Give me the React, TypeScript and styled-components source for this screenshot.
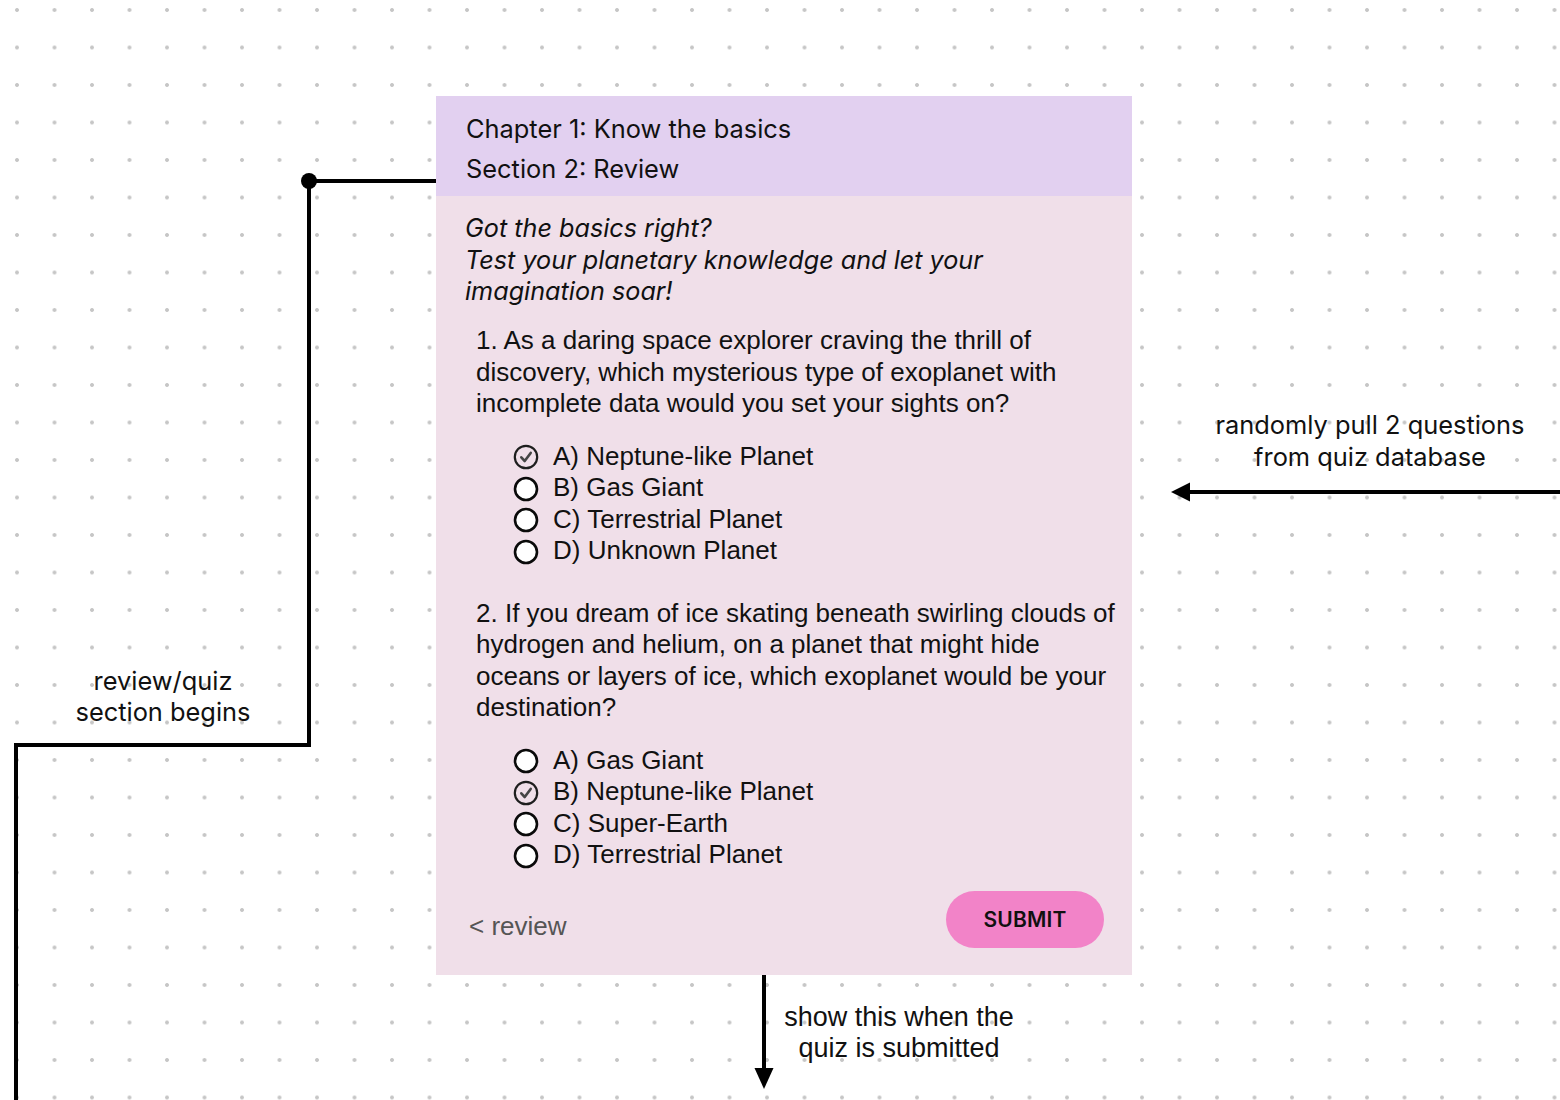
import React from "react";
import styled, { createGlobalStyle } from "styled-components";

const GlobalStyle = createGlobalStyle`
  html, body {
    margin: 0;
    padding: 0;
  }
  body {
    background-color: #ffffff;
    background-image: radial-gradient(circle at center, #c6c6c6 1.5px, transparent 2.3px);
    background-size: 37.5px 37.5px;
    background-position: -1.75px -8.75px;
    font-family: "Inter", "Liberation Sans", sans-serif;
    color: #111;
  }
`;

const SF = `"Inter", "Liberation Sans", sans-serif`;
const ARIAL = `"Liberation Sans", Arial, sans-serif`;

type Option = { label: string; checked?: boolean };
type Question = { lines: string[]; options: Option[] };

const questions: Question[] = [
  {
    lines: [
      "1. As a daring space explorer craving the thrill of",
      "discovery, which mysterious type of exoplanet with",
      "incomplete data would you set your sights on?",
    ],
    options: [
      { label: "A) Neptune-like Planet", checked: true },
      { label: "B) Gas Giant" },
      { label: "C) Terrestrial Planet" },
      { label: "D) Unknown Planet" },
    ],
  },
  {
    lines: [
      "2. If you dream of ice skating beneath swirling clouds of",
      "hydrogen and helium, on a planet that might hide",
      "oceans or layers of ice, which exoplanet would be your",
      "destination?",
    ],
    options: [
      { label: "A) Gas Giant" },
      { label: "B) Neptune-like Planet", checked: true },
      { label: "C) Super-Earth" },
      { label: "D) Terrestrial Planet" },
    ],
  },
];

function Radio({ checked }: { checked?: boolean }) {
  return (
    <RadioMark viewBox="0 0 26 26" aria-hidden>
      {checked ? (
        <>
          <circle cx="13" cy="13" r="11.2" fill="none" stroke="#1e1e1e" strokeWidth="2.2" />
          <path
            d="M8.3 13.3 L11.7 17 L17.7 8.9"
            fill="none"
            stroke="#454545"
            strokeWidth="2.6"
            strokeLinecap="round"
            strokeLinejoin="round"
          />
        </>
      ) : (
        <circle cx="13" cy="13" r="11" fill="#fff" stroke="#0a0a0a" strokeWidth="2.6" />
      )}
    </RadioMark>
  );
}

function Connectors() {
  return (
    <Lines viewBox="0 0 1560 1100">
      <path d="M436 181 H309 V745 H16 V1110" fill="none" stroke="#000" strokeWidth="4" />
      <circle cx="309" cy="181" r="8" fill="#000" />
      <path d="M1560 492 H1186" fill="none" stroke="#000" strokeWidth="4" />
      <polygon points="1171,492 1190,482.5 1190,501.5" fill="#000" />
      <path d="M764 975 V1072" fill="none" stroke="#000" strokeWidth="4" />
      <polygon points="764,1089 754.5,1068 773.5,1068" fill="#000" />
    </Lines>
  );
}

export default function App() {
  return (
    <>
      <GlobalStyle />
      <Canvas>
        <Connectors />

        <Note $left={33} $top={665} $width={260} $lh={31}>
          review/quiz
          <br />
          section begins
        </Note>

        <Note $left={1190} $top={409} $width={360} $lh={32}>
          randomly pull 2 questions
          <br />
          from quiz database
        </Note>

        <Note $left={759} $top={1002} $width={280} $lh={31} $arial>
          show this when the
          <br />
          quiz is submitted
        </Note>

        <Card>
          <Header>
            <HeaderLine>Chapter 1: Know the basics</HeaderLine>
            <HeaderLine>Section 2: Review</HeaderLine>
          </Header>
          <Body>
            <Intro>
              Got the basics right?
              <br />
              Test your planetary knowledge and let your
              <br />
              imagination soar!
            </Intro>

            {questions.map((q, qi) => (
              <QuestionBlock key={qi} $first={qi === 0}>
                <Prompt>
                  {q.lines.map((line, li) => (
                    <React.Fragment key={li}>
                      {li > 0 && <br />}
                      {line}
                    </React.Fragment>
                  ))}
                </Prompt>
                <Options>
                  {q.options.map((o) => (
                    <OptionRow key={o.label}>
                      <Radio checked={o.checked} />
                      <span>{o.label}</span>
                    </OptionRow>
                  ))}
                </Options>
              </QuestionBlock>
            ))}

            <Footer>
              <BackLink>&lt; review</BackLink>
              <SubmitButton>SUBMIT</SubmitButton>
            </Footer>
          </Body>
        </Card>
      </Canvas>
    </>
  );
}

const Canvas = styled.div`
  position: relative;
  width: 1560px;
  height: 1100px;
  overflow: hidden;
`;

const Lines = styled.svg`
  position: absolute;
  left: 0;
  top: 0;
  width: 1560px;
  height: 1100px;
  pointer-events: none;
`;

const Note = styled.div<{ $left: number; $top: number; $width: number; $lh: number; $arial?: boolean }>`
  position: absolute;
  left: ${(p) => p.$left}px;
  top: ${(p) => p.$top}px;
  width: ${(p) => p.$width}px;
  text-align: center;
  font-family: ${(p) => (p.$arial ? ARIAL : SF)};
  font-size: ${(p) => (p.$arial ? 27 : 25.4)}px;
  line-height: ${(p) => p.$lh}px;
  color: #111;
`;

const Card = styled.section`
  position: absolute;
  left: 436px;
  top: 96px;
  width: 696px;
  height: 879px;
  background: #f0dfe9;
  display: flex;
  flex-direction: column;
`;

const Header = styled.header`
  height: 100px;
  box-sizing: border-box;
  padding: 13px 30px 0;
  background: #e2d0f0;
`;

const HeaderLine = styled.div`
  font-family: ${SF};
  font-size: 25.4px;
  line-height: 40px;
  color: #111;
`;

const Body = styled.div`
  flex: 1;
  display: flex;
  flex-direction: column;
  padding: 17px 28px 0 29px;
`;

const Intro = styled.p`
  margin: 0;
  font-family: ${SF};
  font-style: italic;
  font-size: 25.2px;
  line-height: 31.5px;
  color: #111;
`;

const QuestionBlock = styled.div<{ $first?: boolean }>`
  margin-top: ${(p) => (p.$first ? 17.5 : 31)}px;
  padding-left: 11px;
`;

const Prompt = styled.p`
  margin: 0;
  font-family: ${ARIAL};
  font-size: 26px;
  line-height: 31.5px;
  white-space: nowrap;
  color: #111;
`;

const Options = styled.ul`
  list-style: none;
  margin: 21px 0 0;
  padding: 0 0 0 37px;
`;

const OptionRow = styled.li`
  display: flex;
  align-items: center;
  gap: 14px;
  height: 31.5px;
  font-family: ${ARIAL};
  font-size: 26px;
  color: #111;
`;

const RadioMark = styled.svg`
  width: 26px;
  height: 26px;
  flex-shrink: 0;
  margin-top: 2px;
`;

const Footer = styled.div`
  display: flex;
  justify-content: space-between;
  align-items: flex-start;
  margin-top: 20px;
`;

const BackLink = styled.span`
  margin-top: 19px;
  padding-left: 4px;
  font-family: ${ARIAL};
  font-size: 26px;
  line-height: 32px;
  color: #555;
`;

const SubmitButton = styled.button`
  width: 158px;
  height: 57px;
  border: none;
  border-radius: 29px;
  background: #f283c8;
  font-family: ${SF};
  font-weight: 600;
  font-size: 21px;
  letter-spacing: 0.2px;
  color: #111;
  cursor: pointer;
`;
